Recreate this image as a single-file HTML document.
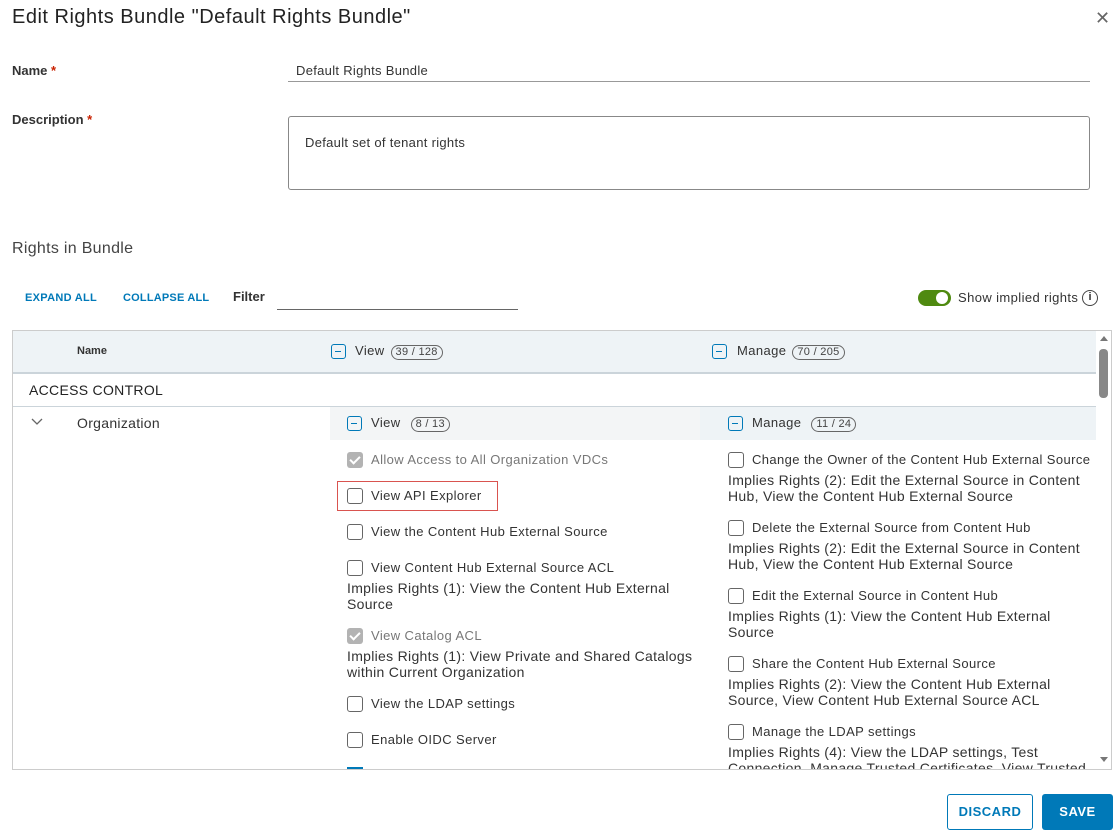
<!DOCTYPE html>
<html><head><style>
*{box-sizing:border-box;margin:0;padding:0}
body{width:1117px;height:833px;background:#fff;font-family:"Liberation Sans",sans-serif;color:#333;position:relative;overflow:hidden}
.a{position:absolute;white-space:nowrap}
.cb{position:absolute;width:16px;height:16px;border:1px solid #666;border-radius:3px;background:#fff}
.cbd{position:absolute;width:16px;height:16px;border-radius:3px;background:#b3b3b3}
.cbd:after{content:"";position:absolute;left:5px;top:2px;width:4px;height:8px;border:solid #fff;border-width:0 2px 2px 0;transform:rotate(45deg)}
.mn{position:absolute;width:15px;height:15px;border:1.5px solid #0079b8;border-radius:3px}
.mn:after{content:"";position:absolute;left:3px;top:5.5px;width:6px;height:1.5px;background:#0079b8}
.pill{display:inline-block;border:1px solid #666;border-radius:8px;font-size:11px;padding:0 4px;line-height:13px;margin-left:6px;color:#444;letter-spacing:.3px}
.t{font-size:13px;color:#333;letter-spacing:.4px}
.g{color:#777}
.im{font-size:14px;line-height:16px;color:#333;white-space:normal;letter-spacing:.3px}
</style></head><body>
<div class="a" style="left:12px;top:6px;font-size:20px;color:#222;letter-spacing:.5px">Edit Rights Bundle "Default Rights Bundle"</div>
<div class="a" style="left:1095px;top:8px;font-size:18px;color:#666">✕</div>
<div class="a" style="left:12px;top:63px;font-size:13px;font-weight:bold;color:#333">Name <span style="color:#c92100">*</span></div>
<div class="a" style="left:296px;top:63px;font-size:13px;letter-spacing:.3px">Default Rights Bundle</div>
<div class="a" style="left:288px;top:81px;width:802px;height:1px;background:#999"></div>
<div class="a" style="left:12px;top:112px;font-size:13px;font-weight:bold;color:#333">Description <span style="color:#c92100">*</span></div>
<div class="a" style="left:288px;top:116px;width:802px;height:74px;border:1px solid #888;border-radius:3px"></div>
<div class="a" style="left:305px;top:135px;font-size:13px;letter-spacing:.3px">Default set of tenant rights</div>
<div class="a" style="left:12px;top:240px;font-size:16px;color:#444;letter-spacing:.3px">Rights in Bundle</div>
<div class="a" style="left:25px;top:292px;font-size:11px;font-weight:bold;color:#0079b8;letter-spacing:.3px">EXPAND ALL</div>
<div class="a" style="left:123px;top:292px;font-size:11px;font-weight:bold;color:#0079b8;letter-spacing:.2px">COLLAPSE ALL</div>
<div class="a" style="left:233px;top:289px;font-size:13px;font-weight:bold">Filter</div>
<div class="a" style="left:277px;top:309px;width:241px;height:1px;background:#666"></div>
<div class="a" style="left:918px;top:290px;width:33px;height:16px;border-radius:8px;background:#4f8a10"></div>
<div class="a" style="left:936px;top:292px;width:12px;height:12px;border-radius:6px;background:#fff"></div>
<div class="a" style="left:958px;top:290px;font-size:13px;letter-spacing:.4px">Show implied rights</div>
<div class="a" style="left:1082px;top:290px;width:16px;height:16px;border:1.5px solid #444;border-radius:50%;font-size:11px;text-align:center;line-height:13px;font-weight:bold">i</div>

<div class="a" style="left:12px;top:330px;width:1100px;height:440px;border:1px solid #ccc"></div>
<div class="a" style="left:13px;top:331px;width:1083px;height:41px;background:#eef3f6"></div>
<div class="a" style="left:13px;top:372px;width:1083px;height:2px;background:#cbd4da"></div>
<div class="a" style="left:77px;top:345px;font-size:11px;font-weight:bold">Name</div>
<div class="mn" style="left:331px;top:344px"></div>
<div class="a t" style="left:355px;top:343px">View<span class="pill">39 / 128</span></div>
<div class="mn" style="left:712px;top:344px"></div>
<div class="a t" style="left:737px;top:343px">Manage<span class="pill">70 / 205</span></div>
<div class="a" style="left:29px;top:382px;font-size:14px;color:#222;letter-spacing:.3px">ACCESS CONTROL</div>
<div class="a" style="left:13px;top:406px;width:1083px;height:1px;background:#cbd4da"></div>
<div class="a" style="left:330px;top:407px;width:370px;height:33px;background:#f3f5f6"></div>
<div class="a" style="left:700px;top:407px;width:396px;height:33px;background:#eef3f6"></div>
<svg class="a" style="left:31px;top:418px" width="12" height="8"><path d="M1 1 L6 6 L11 1" fill="none" stroke="#666" stroke-width="1.3"/></svg>
<div class="a" style="left:77px;top:415px;font-size:14px;letter-spacing:.3px">Organization</div>
<div class="mn" style="left:347px;top:416px"></div>
<div class="a t" style="left:371px;top:415px">View <span class="pill">8 / 13</span></div>
<div class="mn" style="left:728px;top:416px"></div>
<div class="a t" style="left:752px;top:415px">Manage <span class="pill">11 / 24</span></div>

<div class="cbd" style="left:347px;top:452px"></div><div class="a t g" style="left:371px;top:452px">Allow Access to All Organization VDCs</div>
<div class="a" style="left:337px;top:481px;width:161px;height:30px;border:1px solid #d9534f"></div>
<div class="cb" style="left:347px;top:488px"></div><div class="a t" style="left:371px;top:488px">View API Explorer</div>
<div class="cb" style="left:347px;top:524px"></div><div class="a t" style="left:371px;top:524px">View the Content Hub External Source</div>
<div class="cb" style="left:347px;top:560px"></div><div class="a t" style="left:371px;top:560px">View Content Hub External Source ACL</div>
<div class="a im" style="left:347px;top:580px;width:345px">Implies Rights (1): View the Content Hub External Source</div>
<div class="cbd" style="left:347px;top:628px"></div><div class="a t g" style="left:371px;top:628px">View Catalog ACL</div>
<div class="a im" style="left:347px;top:648px;width:350px">Implies Rights (1): View Private and Shared Catalogs within Current Organization</div>
<div class="cb" style="left:347px;top:696px"></div><div class="a t" style="left:371px;top:696px">View the LDAP settings</div>
<div class="cb" style="left:347px;top:732px"></div><div class="a t" style="left:371px;top:732px">Enable OIDC Server</div>
<div class="a" style="left:347px;top:767px;width:16px;height:2px;background:#0079b8"></div>

<div class="cb" style="left:728px;top:452px"></div><div class="a t" style="left:752px;top:452px">Change the Owner of the Content Hub External Source</div>
<div class="a im" style="left:728px;top:472px;width:362px">Implies Rights (2): Edit the External Source in Content Hub, View the Content Hub External Source</div>
<div class="cb" style="left:728px;top:520px"></div><div class="a t" style="left:752px;top:520px">Delete the External Source from Content Hub</div>
<div class="a im" style="left:728px;top:540px;width:362px">Implies Rights (2): Edit the External Source in Content Hub, View the Content Hub External Source</div>
<div class="cb" style="left:728px;top:588px"></div><div class="a t" style="left:752px;top:588px">Edit the External Source in Content Hub</div>
<div class="a im" style="left:728px;top:608px;width:340px">Implies Rights (1): View the Content Hub External Source</div>
<div class="cb" style="left:728px;top:656px"></div><div class="a t" style="left:752px;top:656px">Share the Content Hub External Source</div>
<div class="a im" style="left:728px;top:676px;width:340px">Implies Rights (2): View the Content Hub External Source, View Content Hub External Source ACL</div>
<div class="cb" style="left:728px;top:724px"></div><div class="a t" style="left:752px;top:724px">Manage the LDAP settings</div>
<div class="a" style="left:700px;top:744px;width:396px;height:25px;overflow:hidden"><div class="im" style="position:absolute;left:28px;top:0;width:368px">Implies Rights (4): View the LDAP settings, Test Connection, Manage Trusted Certificates, View Trusted</div></div>

<div class="a" style="left:1096px;top:331px;width:15px;height:438px;background:#fff"></div>
<div class="a" style="left:1100px;top:336px;width:0;height:0;border-left:4px solid transparent;border-right:4px solid transparent;border-bottom:5px solid #777"></div>
<div class="a" style="left:1099px;top:349px;width:9px;height:49px;border-radius:4px;background:#888"></div>
<div class="a" style="left:1100px;top:757px;width:0;height:0;border-left:4px solid transparent;border-right:4px solid transparent;border-top:5px solid #777"></div>

<div class="a" style="left:947px;top:794px;width:86px;height:36px;border:1px solid #0079b8;border-radius:3px;color:#0079b8;font-size:13px;font-weight:bold;text-align:center;line-height:34px;letter-spacing:.5px">DISCARD</div>
<div class="a" style="left:1042px;top:794px;width:71px;height:36px;background:#0079b8;border-radius:3px;color:#fff;font-size:13px;font-weight:bold;text-align:center;line-height:36px;letter-spacing:.5px">SAVE</div>
</body></html>
